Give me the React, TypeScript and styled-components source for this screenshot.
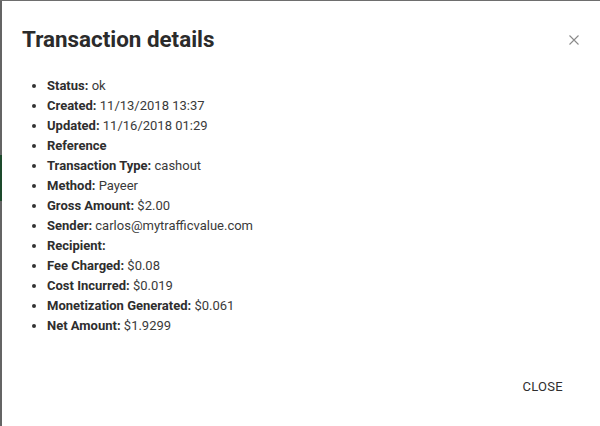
import React from 'react';
import styled, { createGlobalStyle } from 'styled-components';

const GlobalStyle = createGlobalStyle`
  html, body {
    margin: 0;
    padding: 0;
    background: #636363;
  }
  body {
    font-family: Roboto, "Liberation Sans", Arial, sans-serif;
  }
`;

const Page = styled.div`
  display: flex;
  height: 425px;
  border-top: 1px solid #6e6e6e;
`;

const Backdrop = styled.div`
  width: 2px;
  display: flex;
  flex-direction: column;
  background: #646464;
`;

const BackdropGreen = styled.div`
  margin-top: 154px;
  height: 46px;
  background: #1d4a2c;
`;

const Modal = styled.div`
  flex: 1;
  background: #fff;
  display: flex;
  flex-direction: column;
  padding: 25px 22px 0 20px;
`;

const Header = styled.div`
  display: flex;
  justify-content: space-between;
  align-items: flex-start;
`;

const Title = styled.h2`
  margin: 0;
  font-size: 22.4px;
  font-weight: 700;
  color: #2b2b2b;
  line-height: 27px;
`;

const CloseIcon = styled.button`
  border: none;
  background: none;
  padding: 0;
  margin-top: 8px;
  margin-right: -2px;
  width: 12px;
  height: 12px;
  display: flex;
  cursor: pointer;
`;

const DetailList = styled.ul`
  margin: 23px 0 0 0;
  padding-left: 25px;
  list-style: disc;
  font-size: 13px;
  line-height: 20px;
  color: #3a3a3a;
`;

const Item = styled.li`
  &::marker {
    color: #333;
  }
`;

const Key = styled.strong`
  font-weight: 700;
  color: #2e2e2e;
`;

const Footer = styled.div`
  margin-top: auto;
  display: flex;
  justify-content: flex-end;
  padding-bottom: 32px;
`;

const TextButton = styled.button`
  border: none;
  background: none;
  font-family: Roboto, "Liberation Sans", Arial, sans-serif;
  font-size: 13px;
  font-weight: 400;
  letter-spacing: 0.3px;
  color: #2e2e2e;
  text-transform: uppercase;
  padding: 0;
  margin-right: 15px;
  cursor: pointer;
`;

const details: [string, string][] = [
  ['Status:', 'ok'],
  ['Created:', '11/13/2018 13:37'],
  ['Updated:', '11/16/2018 01:29'],
  ['Reference', ''],
  ['Transaction Type:', 'cashout'],
  ['Method:', 'Payeer'],
  ['Gross Amount:', '$2.00'],
  ['Sender:', 'carlos@mytrafficvalue.com'],
  ['Recipient:', ''],
  ['Fee Charged:', '$0.08'],
  ['Cost Incurred:', '$0.019'],
  ['Monetization Generated:', '$0.061'],
  ['Net Amount:', '$1.9299'],
];

export default function App() {
  return (
    <>
      <GlobalStyle />
      <Page>
        <Backdrop>
          <BackdropGreen />
        </Backdrop>
        <Modal>
          <Header>
            <Title>Transaction details</Title>
            <CloseIcon aria-label="close">
              <svg width="12" height="12" viewBox="0 0 12 12">
                <path d="M1.5 1.5 L10.5 10.5 M10.5 1.5 L1.5 10.5" stroke="#8a8a8a" strokeWidth="1.1" />
              </svg>
            </CloseIcon>
          </Header>
          <DetailList>
            {details.map(([k, v]) => (
              <Item key={k}>
                <Key>{k}</Key> {v}
              </Item>
            ))}
          </DetailList>
          <Footer>
            <TextButton>Close</TextButton>
          </Footer>
        </Modal>
      </Page>
    </>
  );
}
